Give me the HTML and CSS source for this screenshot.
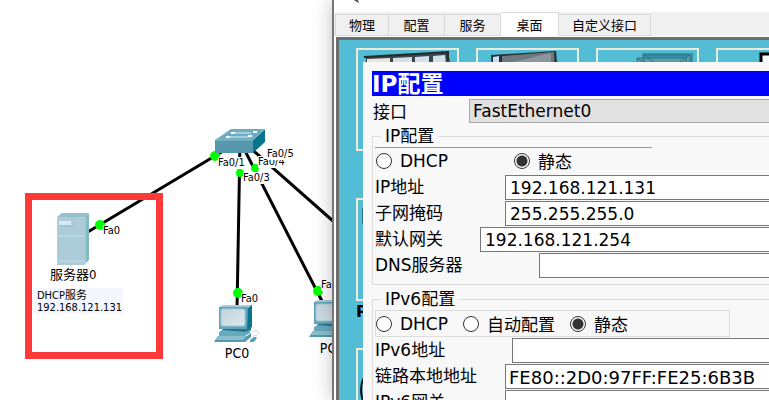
FILE: index.html
```html
<!DOCTYPE html>
<html lang="zh-CN">
<head>
<meta charset="utf-8">
<meta name="viewport" content="width=device-width, initial-scale=1">
<title>IP配置</title>
<link rel="stylesheet" href="styles.css">
</head>
<body>
<svg class="defs" width="0" height="0" aria-hidden="true">
  <defs>
    <linearGradient id="screen" x1="0" y1="0" x2="1" y2="1"><stop offset="0" stop-color="#c3d3dc"/><stop offset="1" stop-color="#dce7ee"/></linearGradient>
    <symbol id="pc" viewBox="0 0 46 38">
      <path d="M5 2 9 0h29l-4 3z" fill="#a3cdda"/>
      <path d="M5 2h29v22H5z" fill="#62a4b9"/>
      <path d="M34 3 38 0v22l-5 4z" fill="#08758f"/>
      <rect x="7" y="4" width="24" height="17" rx="2" fill="url(#screen)" stroke="#9ecbd9"/>
      <path d="M9 24h25l3-3v4l-5 4H5z" fill="#22768d"/>
      <path d="M5 27 9 25l22 2 5-2v3l-5 3H5z" fill="#68a9bd"/>
      <path d="M4 31h29l4-3v4l-6 5H0z" fill="#5698ae"/>
      <path d="M5 31h28l-4 4H1z" fill="#8bbfce"/>
      <path d="M38 27c4-3 8-1 6 2s-7 1-5 3" fill="none" stroke="#c3dae2"/>
      <path d="m36 35 4-3h3l-2 4-2 1h-3z" fill="#5f9fb3"/>
    </symbol>
  </defs>
</svg>

<main class="topology">
  <svg class="links" width="100%" height="100%" aria-hidden="true">
    <g stroke="#000" stroke-width="3">
      <path d="M76 239 240 141"/><path d="m240 142-3 168"/><path d="m240 141 84 164"/><path d="m240 139 110 97"/>
    </g>
    <g fill="#0f0">
      <circle cx="100" cy="225" r="5"/><circle cx="215" cy="156" r="5"/><circle cx="240" cy="173" r="4"/><circle cx="255" cy="168" r="4"/><circle cx="238" cy="293" r="5"/><circle cx="318" cy="291" r="5"/>
    </g>
  </svg>

  <div class="node switch">
    <svg width="50" height="24" viewBox="0 0 50 24" aria-hidden="true">
      <path d="M0 11 16 0h34L38 11z" fill="#6facc1"/>
      <path d="M0 11h38v13H0z" fill="#5797ad"/>
      <path d="M38 11 50 0v13L38 24z" fill="#07748e"/>
      <path d="M0 11h38L50 0" fill="none" stroke="#85bdcd"/>
      <path d="M18 4h18M12 8h22" stroke="#a5cfdc" stroke-width="2"/>
      <path d="M16 4h4M38 3h4M11 8h4M33 7h4" fill="none" stroke="#fff" stroke-width="2"/>
    </svg>
  </div>
  <div class="node server">
    <svg width="32" height="52" viewBox="0 0 32 52" aria-hidden="true">
      <path d="M0 4 5 0h27l-5 4z" fill="#94c0cc"/>
      <path d="M27 4 32 0v47l-5 5z" fill="#84b8c5"/>
      <path d="M0 4h27v48H0z" fill="#accdd7"/>
      <path d="M0 23h28M0 48h28M28 4v48" stroke="#c5dee6"/>
      <path d="M2 8h13v4H2z" fill="#d8e9f0"/>
      <path d="M2 13h13V8" fill="none" stroke="#94bfcc"/>
    </svg>
    <span class="caption server-name">服务器0</span>
  </div>
  <div class="node pc0">
    <svg width="46" height="38"><use href="#pc"/></svg>
    <span class="caption">PC0</span>
  </div>
  <div class="node pc1">
    <svg width="46" height="38"><use href="#pc"/></svg>
    <span class="caption">PC1</span>
  </div>

  <span class="port p-server">Fa0</span>
  <span class="port p-one">Fa0/1</span>
  <span class="port p-four">Fa0/4</span>
  <span class="port p-five">Fa0/5</span>
  <span class="port p-three">Fa0/3</span>
  <span class="port p-pc0">Fa0</span>
  <span class="port p-pc1">Fa0</span>

  <div class="note">DHCP服务<br>192.168.121.131</div>
  <div class="highlight"></div>
</main>

<section class="window">
  <header class="window-title"><svg width="8" height="3" viewBox="0 0 8 3" aria-hidden="true"><path d="M2 0h4l1 3-4-2z" fill="#555"/></svg></header>
  <nav class="tabs">
    <button class="tab">物理</button>
    <button class="tab">配置</button>
    <button class="tab">服务</button>
    <button class="tab selected">桌面</button>
    <button class="tab wide">自定义接口</button>
  </nav>
  <div class="desktop">
    <div class="tiles">
      <div class="tile">
        <svg width="99" height="50" viewBox="0 0 99 50" aria-hidden="true"><path d="M8 7 90 2l4 20H8z" fill="#35464f"/><path d="m9 9 23-1v15H9z" fill="#e8e8da"/><path d="m35 8 19-1v16H35zM57 7l14-1v17H57zM75 6l12-1 2 18H75z" fill="#d3e0e8"/><path d="M6 7 90 2v8" fill="none" stroke="#26292b" stroke-width="2"/></svg>
      </div>
      <div class="tile">
        <svg width="99" height="50" viewBox="0 0 99 50" aria-hidden="true"><path d="m13 5 65-4 2 22H14z" fill="#263039"/><path d="m15 7 6-1v16h-6z" fill="#c7dcf2"/><path d="m24 6 52-4 1 20H24z" fill="#70777e"/><path d="m27 14 46-11v19H24z" fill="#8d969d"/></svg>
      </div>
      <div class="tile">
        <svg width="99" height="50" viewBox="0 0 99 50" aria-hidden="true"><path d="M44 3h51v20H44z" fill="#398fa5"/><path d="M46 5h46v18H46zM39 8h49v15H39zM46 5l22 16L92 5M39 8l20 12" fill="#5a9eac" stroke="#28788b"/></svg>
      </div>
      <div class="tile">
        <svg width="99" height="50" viewBox="0 0 99 50" aria-hidden="true"><path d="M43 4h48v44H43z" fill="#fff" stroke="#000" stroke-width="3"/></svg>
      </div>
      <div class="tile"><svg width="99" height="50" aria-hidden="true"><path d="M4 8h40v16H4z" fill="#35708a"/></svg><b>P</b></div>
      <div class="tile"></div>
      <div class="tile"></div>
      <div class="tile"></div>
      <div class="tile"><svg width="99" height="90" aria-hidden="true"><circle cx="30" cy="40" r="27" fill="#77b4ca" stroke="#111" stroke-width="2"/></svg></div>
    </div>

    <form class="dialog">
      <h1>IP配置</h1>
      <div class="interface"><label for="port">接口</label><select id="port"><option>FastEthernet0</option></select></div>

      <fieldset>
        <legend>IP配置</legend>
        <div class="modes ruled">
          <label><input type="radio" name="v4">DHCP</label>
          <label><input type="radio" name="v4" checked>静态</label>
        </div>
        <div class="field"><label class="mid" for="ip">IP地址</label><input type="text" id="ip" value="192.168.121.131"></div>
        <div class="field"><label class="mid" for="mask">子网掩码</label><input type="text" id="mask" value="255.255.255.0"></div>
        <div class="field"><label class="short" for="gate">默认网关</label><input type="text" id="gate" value="192.168.121.254"></div>
        <div class="field"><label class="long" for="dns">DNS服务器</label><input type="text" id="dns"></div>
      </fieldset>

      <fieldset>
        <legend>IPv6配置</legend>
        <div class="modes framed">
          <label><input type="radio" name="v6">DHCP</label>
          <label><input type="radio" name="v6">自动配置</label>
          <label><input type="radio" name="v6" checked>静态</label>
        </div>
        <div class="field"><label class="wider" for="ip6">IPv6地址</label><input type="text" class="address6" id="ip6"></div>
        <div class="field"><label class="mid" for="local6">链路本地地址</label><input type="text" class="address6" id="local6" value="FE80::2D0:97FF:FE25:6B3B"></div>
        <div class="field"><label class="mid" for="gate6">IPv6网关</label><input type="text" class="address6" id="gate6"></div>
      </fieldset>
    </form>
  </div>
</section>
</body>
</html>
```
FILE: styles.css
```css
* { box-sizing: border-box; }

body {
  margin: 0;
  height: 100vh;
  overflow: hidden;
  position: relative;
  background: #fff;
  color: #000;
  font-family: "DejaVu Sans", "Noto Sans CJK SC", sans-serif;
  font-size: 17px;
}

svg { display: block; }
.defs { position: absolute; }

/* Topology canvas */
.topology {
  position: absolute;
  inset: 0;
  font-family: "DejaVu Sans Condensed", "Noto Sans CJK SC", sans-serif;
  font-size: 11px;
}
.links { position: absolute; inset: 0; }
.node { position: absolute; display: flex; flex-direction: column; align-items: center; }
.caption { font-size: 14px; line-height: 20px; white-space: nowrap; }
.server-name { font-size: 13px; }
.switch { left: 215px; top: 129px; }
.server { left: 50px; top: 213px; }
.pc0 { left: 214px; top: 305px; }
.pc1 { left: 309px; top: 300px; }

.port { position: absolute; line-height: 12px; background: #fff; }
.p-server { left: 103px; top: 225px; }
.p-one { left: 218px; top: 157px; }
.p-four { left: 258px; top: 156px; }
.p-five { left: 267px; top: 148px; }
.p-three { left: 243px; top: 172px; }
.p-pc0 { left: 241px; top: 293px; }
.p-pc1 { left: 321px; top: 279px; }

.note {
  position: absolute;
  left: 33px;
  top: 288px;
  padding: 2px 1px 0 4px;
  line-height: 12px;
  background: #f5f7ff;
}
.highlight {
  position: absolute;
  left: 25px;
  top: 193px;
  width: 138px;
  height: 166px;
  border: 7px solid #ff3838;
}

/* Device window */
.window {
  position: absolute;
  left: 332px;
  right: 0;
  top: 0;
  bottom: 0;
  display: flex;
  flex-direction: column;
  background: #fff;
  border-left: 2px solid #777;
  box-shadow: 0 0 18px rgba(0, 0, 0, 0.25);
  overflow: hidden;
}
.window-title { flex: none; height: 12px; padding-left: 18px; }
.tabs {
  flex: none;
  display: flex;
  align-items: flex-end;
  height: 24px;
  padding-left: 1px;
  background: #f0f0f0;
}
.tab {
  width: 56px;
  height: 22px;
  padding: 0;
  border: 1px solid #d9d9d9;
  border-left: 0;
  background: #f0f0f0;
  color: #000;
  font-family: "Noto Sans CJK SC", sans-serif;
  font-size: 13px;
  line-height: 20px;
}
.tab:first-child { width: 54px; border-left: 1px solid #d9d9d9; }
.tab.selected { width: 58px; height: 24px; background: #fff; border-bottom: 0; }
.tab.wide { width: 92px; }

.desktop {
  position: relative;
  flex: 1;
  min-height: 0;
  margin: 1px 0 0 2px;
  border: solid #6d6d6d;
  border-width: 3px 0 0 3px;
  background: #53bdd5;
  overflow: hidden;
}
.tiles {
  display: grid;
  grid-template-columns: repeat(4, 103px);
  grid-auto-rows: 103px;
  gap: 47px 17px;
  padding: 8px 0 0 17px;
}
.tile { position: relative; border: 2px solid #ecead8; }
.tile b { position: absolute; left: -2px; top: 102px; font-size: 16px; line-height: 20px; }

/* IP dialog */
.dialog {
  position: absolute;
  left: 24px;
  right: 0;
  top: 22px;
  padding: 9px 0 0 9px;
  background: #f8f8f8;
}
h1 {
  margin: 0;
  height: 25px;
  font-size: 23px;
  line-height: 27px;
  font-weight: bold;
  color: #fff;
  background: #00f;
}
.interface { display: flex; align-items: center; height: 29px; }
.interface label { width: 97px; padding-left: 1px; }
select {
  flex: 1;
  min-width: 0;
  height: 24px;
  padding: 0 3px;
  border: 1px solid #aaa;
  border-right: 0;
  border-radius: 0;
  appearance: none;
  background: #e1e1e1;
  color: #000;
  font: inherit;
}
fieldset {
  margin: 0 0 3px;
  padding: 0 0 6px 2px;
  min-width: 0;
  border: 1px solid #dcdcdc;
  border-right: 0;
}
legend { margin-left: 6px; padding: 0 4px; line-height: 22px; }
.modes { display: flex; align-items: center; height: 27px; }
.modes label { display: flex; align-items: center; white-space: nowrap; gap: 8px; }
.ruled { position: relative; gap: 66px; padding-left: 1px; }
.ruled::before { content: ""; position: absolute; left: 0; top: 0; width: 277px; border-top: 1px solid #999; }
.framed { gap: 15px; width: 355px; border: 1px solid #dcdcdc; }
input[type="radio"] {
  appearance: none;
  width: 16px;
  height: 16px;
  margin: 0;
  border: 1px solid #333;
  border-radius: 50%;
  background: #fff;
}
input[type="radio"]:checked { background: radial-gradient(circle, #333 5px, #fff 6px); }
.field { display: flex; align-items: center; height: 26px; }
.field label { flex: none; white-space: nowrap; line-height: 24px; }
.short { width: 105px; }
.mid { width: 130px; }
.wider { width: 137px; }
.long { width: 164px; }
input[type="text"] {
  flex: 1;
  min-width: 0;
  height: 25px;
  padding: 2px 4px 0;
  border: 1px solid #777;
  border-right: 0;
  background: #fff;
  color: #000;
  font: inherit;
}
input.address6 { padding-left: 3px; font-size: 18px; }
```
